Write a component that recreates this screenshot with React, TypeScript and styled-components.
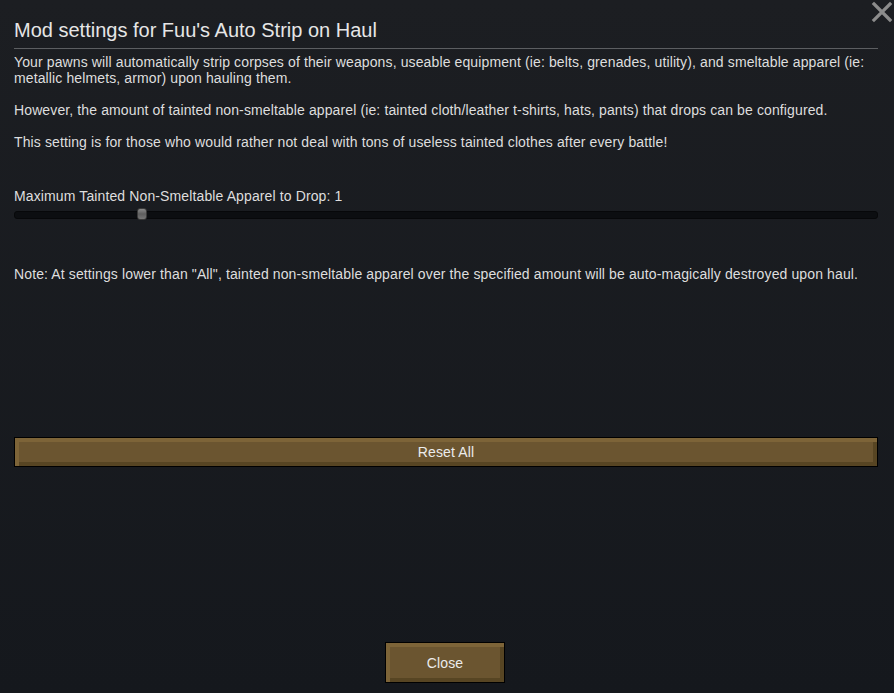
import React from "react";
import styled, { createGlobalStyle } from "styled-components";

const Global = createGlobalStyle`
  html, body { margin: 0; padding: 0; background: #16191e; }
  body { font-family: "Liberation Sans", Arial, sans-serif; }
`;

const Window = styled.div`
  position: relative;
  width: 894px;
  height: 693px;
  box-sizing: border-box;
  background: linear-gradient(#1c1e22, #15181d);
  padding: 15px 16px 10px 14px;
  display: flex;
  flex-direction: column;
  color: #dcdcdc;
  font-size: 14px;
  letter-spacing: 0.12px;
`;

const CloseX = styled.button`
  position: absolute;
  top: 1px;
  right: 1px;
  width: 22px;
  height: 22px;
  padding: 0;
  border: none;
  background: none;
  cursor: pointer;
`;

const Title = styled.h1`
  margin: 0;
  font-weight: normal;
  font-size: 20px;
  line-height: 30px;
  letter-spacing: 0;
  color: #e6e6e6;
  padding-bottom: 3px;
  border-bottom: 1px solid #5c5e61;
`;

const Para = styled.p<{ $mt: number }>`
  margin: ${(p) => p.$mt}px 0 0 0;
  line-height: 16px;
  color: #dedede;
`;

const SliderTrack = styled.div`
  position: relative;
  margin-top: 7px;
  height: 6px;
  border-radius: 3px;
  background: #0c0e11;
  border: 1px solid #07080a;
`;

const Thumb = styled.div`
  position: absolute;
  top: -4px;
  width: 10px;
  height: 12px;
  border-radius: 3px;
  background: linear-gradient(#8a8a8a, #5e5e5e 50%, #777);
  border: 1px solid #3a3a3a;
  box-sizing: border-box;
`;

const Spacer = styled.div`
  flex: 1;
`;

const Gap = styled.div<{ $h: number }>`
  height: ${(p) => p.$h}px;
  flex: none;
`;

const WoodButton = styled.button<{ $w?: number; $h: number; $fs?: number }>`
  box-sizing: border-box;
  width: ${(p) => (p.$w ? `${p.$w}px` : "100%")};
  height: ${(p) => p.$h}px;
  background: #6b5530;
  border: 1px solid #000;
  box-shadow:
    inset 4px 4px 0 #7d6438,
    inset -4px -4px 0 #574523;
  color: #ececec;
  font-family: "Liberation Sans", Arial, sans-serif;
  font-size: ${(p) => p.$fs ?? 14}px;
  letter-spacing: 0.12px;
  padding: 0;
  cursor: pointer;
`;

const Footer = styled.div`
  display: flex;
  justify-content: center;
  padding-right: 2px;
`;

export default function App() {
  return (
    <>
      <Global />
      <Window>
        <CloseX aria-label="close">
          <svg width="22" height="22" viewBox="0 0 22 22">
            <path d="M3 3 L19 19 M19 3 L3 19" stroke="#8c8c8c" strokeWidth="3.2" strokeLinecap="square" />
          </svg>
        </CloseX>
        <Title>Mod settings for Fuu's Auto Strip on Haul</Title>
        <Para $mt={5}>
          Your pawns will automatically strip corpses of their weapons, useable equipment (ie: belts, grenades, utility), and smeltable apparel (ie: metallic helmets, armor) upon hauling them.
        </Para>
        <Para $mt={16}>
          However, the amount of tainted non-smeltable apparel (ie: tainted cloth/leather t-shirts, hats, pants) that drops can be configured.
        </Para>
        <Para $mt={16}>This setting is for those who would rather not deal with tons of useless tainted clothes after every battle!</Para>
        <Para $mt={38}>Maximum Tainted Non-Smeltable Apparel to Drop: 1</Para>
        <SliderTrack>
          <Thumb style={{ left: "122px" }} />
        </SliderTrack>
        <Para $mt={47}>
          Note: At settings lower than "All", tainted non-smeltable apparel over the specified amount will be auto-magically destroyed upon haul.
        </Para>
        <Gap $h={155} />
        <WoodButton $h={30}>Reset All</WoodButton>
        <Spacer />
        <Footer>
          <WoodButton $w={120} $h={41}>Close</WoodButton>
        </Footer>
      </Window>
    </>
  );
}
